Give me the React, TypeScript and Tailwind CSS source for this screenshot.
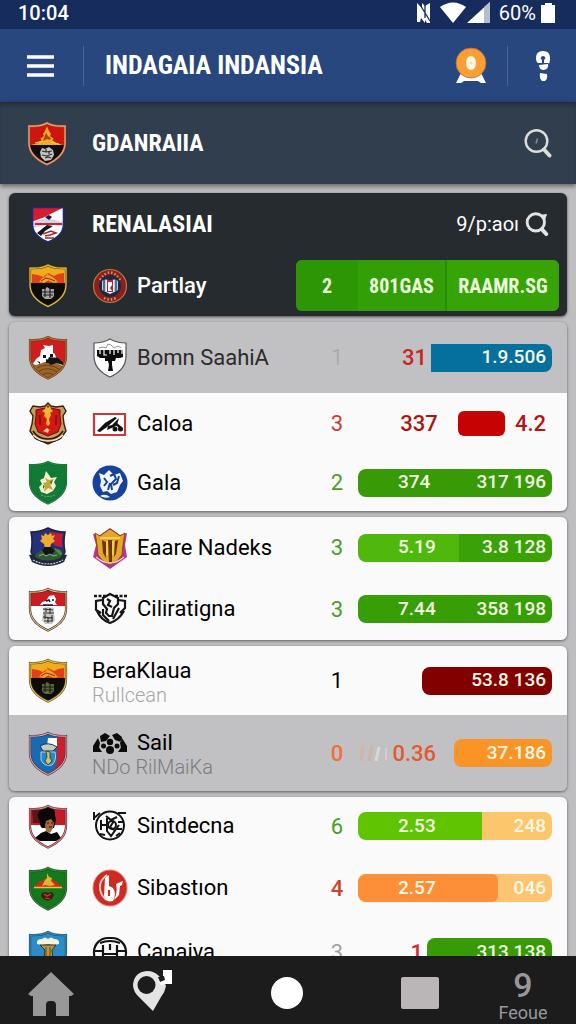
import { useId } from 'react';
import type { ReactNode } from 'react';

const SHIELD = 'M20 2 C15 5 9 5.5 2 5 V22 C2 33 10 39 20 43.500 C30 39 38 33 38 22 V5 C31 5.500 25 5 20 2Z';

function Shield({ rim, edge = '#5c3a12', children }: { rim: string; edge?: string; children: ReactNode }) {
  const id = useId();
  return (
    <svg viewBox="0 0 40 45" className="h-[45px] w-10 shrink-0" aria-hidden="true">
      <clipPath id={id}>
        <path d={SHIELD} />
      </clipPath>
      <g clipPath={`url(#${id})`}>{children}</g>
      <path d={SHIELD} fill="none" stroke={edge} strokeWidth="2.200" />
      <path d={SHIELD} fill="none" stroke={rim} strokeWidth="1.100" />
    </svg>
  );
}

function PeakCrest() {
  return (
    <Shield rim="#e8a878" edge="#a85838">
      <path d="M0 0h40v25H0z" fill="#cc160e" />
      <path d="M0 24h40v21H0z" fill="#100c0c" />
      <path d="M20 5l2 5 2 3-1 2 4 3-2 1 4 3 7 2H4l7-2 4-3-2-1 4-3-1-2 2-3z" fill="#f2ac24" />
      <path d="M17 17l2-5 2 3 3 2-1 2-3-1-4 2z" fill="#a4480c" />
      <path d="M8 22l8-2M24 21l8 2" stroke="#fbd460" strokeWidth="1" />
      <path d="M15 27l3 1 4-2 4 3 1 5-3 5-6 1-4-4-1-5z" fill="#c4c4c4" />
      <path d="M15 30l4 1 6-1M15 34l5 1 5-2M19 28v3M18 37l3-1 3 1M22 31v2" stroke="#2c2c2c" strokeWidth="1.200" fill="none" />
    </Shield>
  );
}

function SunriseCrest({ mark = '#a8a8a8' }) {
  return (
    <Shield rim="#e6c650" edge="#54400c">
      <path d="M0 0h40v21H0z" fill="#f0ac1c" />
      <path d="M4 11l6 1 5 2 5-4 6 3 4-2 6-1v11H4z" fill="#e0401a" />
      <path d="M11 19l3-4 3-1 2-3 4 2 4 3 3 3-4 1-4-2-5 2z" fill="#f0a028" />
      <path d="M13 18l5-3 4 1 5 2M17 20l4-2" stroke="#84300c" fill="none" />
      <path d="M0 20h40v25H0z" fill="#0e0c0a" />
      <path d="M14 26h3l2-2 3 2h4v7l-3 3h-6l-3-3z" fill={mark} />
      <path d="M17 25v9M22 25v10M14 29h12M15 32h10" stroke="#1a1a16" strokeWidth="1.100" />
    </Shield>
  );
}

function StripeCrest() {
  return (
    <svg viewBox="0 0 40 45" className="h-[45px] w-10 shrink-0" aria-hidden="true">
      <path d="M4.500 5.500h31v17c0 8-7 14-15.500 17.500C11.500 36.500 4.500 30.500 4.500 22.500z" fill="#fff" />
      <path d="M4.500 5.500h31l-20 10-11 4z" fill="#d51c30" />
      <path d="M5 20l14-4 16 4v4l-13-2-17 4z" fill="#cfd6e8" />
      <path d="M17 15l4-2 3 2-3 3z" fill="#161c38" />
      <path d="M7 22h27" stroke="#d51c30" strokeWidth="2" />
      <path d="M9 31l10-8 6 1-8 5-4 5z" fill="#14161c" />
      <path d="M15 32l8-3 5 2-6 2-5 1M17 36h9" stroke="#9c2828" strokeWidth="1.500" fill="none" />
      <path d="M4.500 5.500h31v17c0 8-7 14-15.500 17.500C11.500 36.500 4.500 30.500 4.500 22.500z" fill="none" stroke="#1c2a78" strokeWidth="1.600" />
    </svg>
  );
}

function BullCrest() {
  return (
    <Shield rim="#b07840" edge="#6a3414">
      <path d="M0 0h40v45H0z" fill="#cf1d1d" />
      <path d="M0 29q20-9 40 2v14H0z" fill="#9c6428" />
      <path d="M5 29l3-5 4-3 1-6 4-2-2-3 6 1 4-1v8l2 1 1 4 6 3 1 5-7-3-11-1-9 3z" fill="#fff" />
      <path d="M21 22l9 1 5 4v3l-7-2-5 2-4-3z" fill="#141414" />
      <path d="M15 20h3v3h-3zM22 19h3v3h-3zM18 24l3 1v3h-3zM9 26l3 1v2z" fill="#141414" />
      <path d="M9 33q11-6 22 1M11 36q9-5 18 1M14 40q6-4 12 0" stroke="#6a3c14" strokeWidth=".9" fill="none" />
    </Shield>
  );
}

function RoyalCrest() {
  return (
    <svg viewBox="0 0 40 45" className="h-[45px] w-10 shrink-0" aria-hidden="true">
      <path d="M20 2l3 3 5 1 7-1 3 5-3 5 1 8 2 7-5 7-13 6-13-6-5-7 2-7 1-8-3-5 3-5 7 1 5-1z" fill="#c89c54" stroke="#401c0c" strokeWidth="1.400" />
      <path d="M8 9l9-2 3-2 3 2 9 2v6l1 8-3 8-10 4-10-4-3-8 1-8z" fill="#d01814" stroke="#601010" />
      <path d="M17 8l1-3 2 2 2-2 1 3 2 2-3 2 1 2-2 4 1 5-2 2-2-2 1-5-3-3 1-3-3-2z" fill="#f2b62e" />
      <path d="M12 14v10M28 14v10" stroke="#7c0c0c" strokeWidth="1.300" />
      <path d="M15 30l4-3 4 3-2-1-1 3z" fill="#f0c8a0" />
      <path d="M5 30q5 8 15 8t15-8M7 37q13 8 26 0" stroke="#241812" strokeWidth="1.500" fill="none" />
      <path d="M5 34q6 6 15 6t15-6" stroke="#f1e2c2" strokeWidth="1.500" fill="none" />
    </svg>
  );
}

function GreenCrest() {
  return (
    <Shield rim="#2c8848" edge="#0c6428">
      <path d="M0 0h40v45H0z" fill="#117a36" />
      <path d="M12 20l4-2 2-7 3 4 2 3 6-1-3 5 2 4-3 5-6 3-6-2-2-5 3-3z" fill="#f4f0d0" />
      <path d="M17 18l4 2 5-1-4 5 3 6-5-2-4 4 1-6-2-3 4-1z" fill="#c8a42c" />
      <path d="M22 22l3-2-2 5zM15 25l2 1-2 3z" fill="#117a36" />
      <path d="M13 35q7 3 14 0" stroke="#6cb068" fill="none" strokeDasharray="2 1" />
    </Shield>
  );
}

function EagleCrest() {
  return (
    <svg viewBox="0 0 40 45" className="h-[45px] w-10 shrink-0" aria-hidden="true">
      <path d="M20 3q-8 4-17 4 2 10 0 20 3 9 17 13 14-4 17-13-2-10 0-20-9 0-17-4z" fill="#26307a" stroke="#1c2438" strokeWidth="1.500" />
      <path d="M21 7q7 1 14 1.500-2 9 0 14l-8-2-6-6z" fill="#c41c38" />
      <path d="M26 23l6 2 3 5-5 3z" fill="#508c30" />
      <path d="M6 31l7-6 13-1 8 8-6 5-10 2z" fill="#2c5c30" />
      <path d="M13 10l3 1 1-3 3 2 3-2 1 3 3-1-2 4 2 2-4 3-1 4h-5l-1-4-4-3 2-2z" fill="#f0aa2c" />
      <path d="M14 25l3-3h6l4 4-4 4h-6z" fill="#10141a" />
      <path d="M11 31l4-2 3 2 4-2 3 2 4-1" stroke="#9cb080" fill="none" />
      <path d="M1 30l5-1 2 4q12 5 24 0l2-4 5 1-3 7q-16 8-32 0z" fill="#20283a" />
      <path d="M5 35q15 8 30 0" stroke="#c9cedb" strokeWidth="1.200" fill="none" strokeDasharray="2 1" />
    </svg>
  );
}

function RedWhiteCrest() {
  return (
    <Shield rim="#d8c48c" edge="#3c1c14">
      <path d="M0 0h40v45H0z" fill="#fdfdfd" />
      <path d="M0 0h40v19H0z" fill="#cb1c24" />
      <path d="M12 18l2-3 4-1 3-5 5-1 2 4-1 3 2 3z" fill="#fff" />
      <path d="M18 14l3-1 1 2M24 13h2M15 18h10" stroke="#1a1a1a" strokeWidth="1.500" fill="none" />
      <path d="M15 21l5-1 6 1v5l1 7-3 4h-7l-3-4 1-7z" fill="#c8c8c8" />
      <path d="M15 22l10 1M15 26h11M15 30l10 1M16 34h9M18 21v4M22 21v6M17 27v5M20 30v6M24 28v6" stroke="#303030" strokeWidth="1.100" />
    </Shield>
  );
}

function BlueRedCrest() {
  return (
    <Shield rim="#d8a8a8" edge="#48202c">
      <path d="M0 0h40v45H0z" fill="#166bb4" />
      <path d="M29 0h11v45H22q7-8 7-18z" fill="#c8202c" />
      <path d="M20 7h9v9l-10-1z" fill="#fff" />
      <path d="M12 15q8-5 17 1l-4 4H15z" fill="#c4ccc4" stroke="#15344c" />
      <path d="M13 21h14q2 8-3 13-8 2-11-5z" fill="#2888c4" stroke="#d8e4ec" strokeWidth=".8" />
      <path d="M18 20l4 1v6l2 3-4 4-3-4 2-4z" fill="#cfc468" stroke="#173a32" strokeWidth=".8" />
    </Shield>
  );
}

function PortraitCrest() {
  return (
    <Shield rim="#c89090" edge="#641c20">
      <path d="M0 0h40v45H0z" fill="#fff" />
      <path d="M0 0h40v21H0z" fill="#c41c24" />
      <path d="M4 5h9v14H5z" fill="#5c1418" />
      <path d="M10 9q3-6 10-6 8 1 7 8l1 5-2 8H14q-3-3-2-7-3-4-2-8z" fill="#0c0808" />
      <path d="M18 17l5-2 3 4-1 5-3 5-4-2-1-5z" fill="#a8683c" />
      <path d="M19 19h2M23 19h2M21 23h3" stroke="#2c1008" />
      <path d="M7 34l6-5 5-2 5 3 6-2 4 6-5 3H12z" fill="#080808" />
    </Shield>
  );
}

function GreenMountainCrest() {
  return (
    <Shield rim="#3c8c3c" edge="#184c18">
      <path d="M0 0h40v45H0z" fill="#14781c" />
      <path d="M6 21q4-5 9-7 5-3 10 0 5 2 9 7z" fill="#d02c14" />
      <path d="M19 7l2 4 3 1-1 3 4 4-5 1-5-1-3 1 3-6 2-2z" fill="#e0b434" />
      <path d="M6 21.500h28" stroke="#e8c440" strokeWidth="1.300" />
      <path d="M14 27l3-1 3 1 4-1 2 3-2 4-4 2-5-2-2-3z" fill="#4c1810" />
      <path d="M16 28l3 2 4-2M17 32l5 1" stroke="#c04838" strokeWidth="1.200" fill="none" />
    </Shield>
  );
}

function SkyCrest() {
  return (
    <Shield rim="#3c88b4" edge="#1c4c6c">
      <path d="M0 0h40v45H0z" fill="#2c8cc8" />
      <path d="M9 14q-1-5 5-5 3-3 6 0 3-3 6 0 6 0 5 5l-5 1-6-1-6 1z" fill="#f4f0dc" />
      <path d="M12 15h16l-4 5 1 9H16l1-9z" fill="#b89840" stroke="#3c3018" />
      <path d="M18 17v12M22 17v12" stroke="#5c4818" />
    </Shield>
  );
}

/* second column club badges */

function RoundBadge() {
  return (
    <svg viewBox="0 0 36 36" className="size-9" aria-hidden="true">
      <circle cx="18" cy="18" r="16.500" fill="#8c2018" stroke="#b87850" strokeWidth="1.200" />
      <path d="M8 12q10-15 20 0" fill="none" stroke="#e8b890" strokeWidth="2.500" strokeDasharray="1.500 2" opacity=".75" />
      <path d="M12 30q6 3 12 0" fill="none" stroke="#e8b890" strokeWidth="2.500" strokeDasharray="1.500 2" opacity=".75" />
      <circle cx="18" cy="18" r="11" fill="#1c2844" />
      <path d="M10 13q4-3 8 0 4-3 8 0v9l-8 4-8-4z" fill="#e8eef2" />
      <path d="M12 12v11M24 12v11" stroke="#48709c" strokeWidth="2.500" />
      <path d="M15 12h6v12h-6z" fill="#b02830" />
      <path d="M16 14h4v3l-2 3 2 3h-4z" fill="#fff" />
    </svg>
  );
}

function HammerBadge() {
  return (
    <svg viewBox="0 0 36 40" className="h-10 w-9" aria-hidden="true">
      <path d="M18 1q7 4 16 4v13c0 10-7 17-16 21C9 35 2 28 2 18V5q9 0 16-4z" fill="#fff" stroke="#555" strokeWidth="1.200" />
      <path d="M5 12h26v7l-3 1H8l-3-2z" fill="#0c0c0c" />
      <path d="M8 12v4M12 12v5h3M18 12v4M22 12v5M26 12v3M30 12v4" stroke="#fff" strokeWidth="1.200" fill="none" />
      <path d="M13 20h11l-1 3h-3v4l1 6h-5l1-6-1-4h-3z" fill="#0c0c0c" />
      <path d="M7 10l4-1 3 1 2-4 3 1 3 3 4-2 3 2" stroke="#909090" fill="none" />
    </svg>
  );
}

function FlagBadge() {
  return (
    <svg viewBox="0 0 36 36" className="size-9" aria-hidden="true">
      <path d="M2 8h31v21H2z" fill="#fff" stroke="#c83840" strokeWidth="2.200" />
      <path d="M5 25l8-8 10-6 2 1-10 9-7 5z" fill="#111" />
      <path d="M27 12l-7 7-4 1-1 4 7-3 3-2z" fill="#111" />
      <circle cx="23" cy="23" r="2.500" fill="#111" />
      <circle cx="28.500" cy="23" r="2.500" fill="#111" />
      <path d="M23 17l6 5" stroke="#111" strokeWidth="2.500" />
    </svg>
  );
}

function LionBadge() {
  return (
    <svg viewBox="0 0 36 36" className="size-9" aria-hidden="true">
      <circle cx="18" cy="18" r="17.500" fill="#14429c" />
      <path d="M7 8l5 2 5-5 3 3 2 2 6-2 3 8-3 4-3 7-6 2-4-3-4 1-3-6 1-5z" fill="#f2f5fb" />
      <path d="M12 13l3 4-3 4M18 11l4-2 2 5-5 5 1 6M27 11l-2 7-4 2M16 25l2-7" stroke="#14429c" strokeWidth="2" fill="none" />
      <path d="M8 31q5-3 10 1-5 2-10-1z" fill="#f2f5fb" />
    </svg>
  );
}

function CrownBadge() {
  return (
    <svg viewBox="0 0 36 42" className="h-[42px] w-9" aria-hidden="true">
      <path d="M1 7l7 1 10-7 10 7 7-2-2 12 2 12-17 12L1 30l3-12z" fill="#b03890" />
      <path d="M3 6l5 3 4-3 6-4 6 4 4 3 5-3-2 12-1 10-5 6-7 4-7-4-5-6-1-10z" fill="#e4a828" stroke="#8c4418" />
      <path d="M10 13l4 2v16l-3-5zM16 13h4v22h-3zM23 14l3-1-2 14-2 3z" fill="#6c340c" />
      <path d="M8 11h20M15 14v14M21 14v14" stroke="#f8d858" strokeWidth="1.500" />
      <path d="M4 30q14 12 28 0" fill="none" stroke="#f0c8e0" strokeWidth="1.200" />
    </svg>
  );
}

function LineShieldBadge() {
  return (
    <svg viewBox="0 0 36 36" className="size-9" fill="none" stroke="#151515" strokeWidth="2.200" aria-hidden="true">
      <path d="M2 5h12M23 5h12" strokeDasharray="3 1.500" strokeWidth="2.500" />
      <path d="M18 3l-7 4v6l4 5-1 4 3 3h3l2-8 4-4V7z" />
      <path d="M10 9L4 10v9l5 3M26 9l7 1v7l-5 5M5 20q4 9 13 12 9-3 14-12" />
      <path d="M11 18v6l6 6M27 17l-6 11M15 8l3 2-2 4 4 2" />
    </svg>
  );
}

function DomeBadge() {
  return (
    <svg viewBox="0 0 36 22" className="h-[22px] w-9" aria-hidden="true">
      <g fill="#0c0c0c">
        <path d="M8 4l5-3 5 3-4 5-5 1zM20 3l5-2 5 4-1 5-6-2zM1 14l5-8 2 5-1 5-1 4H1zM35 14l-5-8-2 5 1 5 1 4h5z" />
        <circle cx="18" cy="10" r="3.200" />
        <circle cx="18" cy="18" r="4" />
        <circle cx="11.500" cy="14" r="2.500" />
        <circle cx="25" cy="14" r="2.500" />
        <path d="M6 14l4 6H4zM30 14l-4 6h6z" />
      </g>
    </svg>
  );
}

function MonogramBadge() {
  return (
    <svg viewBox="0 0 36 36" className="size-9" fill="none" stroke="#141414" strokeWidth="2" aria-hidden="true">
      <circle cx="18" cy="17.500" r="14" />
      <path d="M2 4v8M2 10l6-5M26 5h8M9 12v10M9 17h6M15 10v13l4 5 8-11M14 8l5 4 6-3M22 13l-4 6 4 3M26 14h5M25 21h5" />
      <circle cx="20" cy="17" r="4" />
      <path d="M8 26l5 1M24 28l4-3" />
    </svg>
  );
}

function SwirlBadge() {
  return (
    <svg viewBox="0 0 36 38" className="h-[38px] w-9" aria-hidden="true">
      <ellipse cx="18" cy="19" rx="17" ry="18" fill="#cc2a22" stroke="#e88070" />
      <path d="M15 6q-11 8-5 20l4 5" fill="none" stroke="#f4d4cc" strokeWidth="1.800" />
      <path d="M13 9l4-3v11l4 2q4 6 0 13-8 2-9-5z" fill="#fff" />
      <path d="M17 21v6" stroke="#cc2a22" strokeWidth="2" />
      <path d="M24 15l7-3-1 4-2 1-1 9-5 5q4-8 2-16z" fill="#fff" />
    </svg>
  );
}

function BallBadge() {
  return (
    <svg viewBox="0 0 36 36" className="size-9" fill="none" stroke="#141414" strokeWidth="2.200" aria-hidden="true">
      <rect x="2" y="4" width="32" height="29" rx="14" />
      <path d="M1 17h10M25 17h10M11 20h14M11 11v18M25 11v18M8 9q10-4 20 0M18 10v6" />
    </svg>
  );
}

function SearchIcon({ className, heavy }: { className: string; heavy?: boolean }) {
  return (
    <svg viewBox="0 0 28 30" className={className} fill="none" stroke="currentColor" aria-hidden="true">
      <circle cx="12.500" cy="13" r="10.800" strokeWidth={heavy ? 3.6 : 2.4} />
      <path d="M20 21.500l5.500 6" strokeWidth={heavy ? 5 : 4} strokeLinecap="round" />
      {heavy ? (
        <path d="M19 4l7-1-3 8z" fill="currentColor" />
      ) : (
        <path d="M13.500 10.500l-1.500 5" strokeWidth="1.500" opacity=".5" />
      )}
    </svg>
  );
}

type Segment = { text?: string; className: string };

function Bar({ className, segments }: { className: string; segments: Segment[] }) {
  return (
    <div className={`flex h-7 overflow-hidden text-[19px] font-medium text-[#f4f8e4] ${className}`}>
      {segments.map((s, i) => (
        <span key={i} className={`flex items-center whitespace-nowrap ${s.className}`}>
          {s.text}
        </span>
      ))}
    </div>
  );
}

type Team = {
  crest: ReactNode;
  badge?: ReactNode;
  name: string;
  sub?: string;
  subColor?: string;
  count: string;
  countColor: string;
  row: string;
  result: ReactNode;
};

const groups: Team[][] = [
  [
    {
      crest: <BullCrest />,
      badge: <HammerBadge />,
      name: 'Bomn SaahiA',
      count: '1',
      countColor: 'text-[#a4a4a6] font-light',
      row: 'h-[71px] bg-[#c1c1c3] text-[#2b2b2d]',
      result: (
        <>
          <span className="mr-1 text-[#cc2222]">31</span>
          <Bar className="w-[121px] rounded-r-lg bg-[#06709c]" segments={[{ text: '1.9.506', className: 'flex-1 justify-end pr-1.5' }]} />
        </>
      ),
    },
    {
      crest: <RoyalCrest />,
      badge: <FlagBadge />,
      name: 'Caloa',
      count: '3',
      countColor: 'text-[#cf3a30]',
      row: 'h-[61px] bg-[#fafafa]',
      result: (
        <>
          <span className="mr-5 text-[#ac1414]">337</span>
          <div className="mr-2.5 h-[25px] w-[47px] rounded-md bg-[#c60202]" />
          <span className="mr-1.5 text-[#b41414]">4.2</span>
        </>
      ),
    },
    {
      crest: <GreenCrest />,
      badge: <LionBadge />,
      name: 'Gala',
      count: '2',
      countColor: 'text-[#46a028]',
      row: 'h-[57px] bg-[#fafafa]',
      result: (
        <Bar
          className="w-full rounded-lg bg-[#379a06]"
          segments={[
            { text: '374', className: 'flex-1 pl-10' },
            { text: '317 196', className: 'pr-1.5' },
          ]}
        />
      ),
    },
  ],
  [
    {
      crest: <EagleCrest />,
      badge: <CrownBadge />,
      name: 'Eaare Nadeks',
      count: '3',
      countColor: 'text-[#46a028]',
      row: 'h-[61px] bg-[#fafafa]',
      result: (
        <Bar
          className="w-full rounded-lg"
          segments={[
            { text: '5.19', className: 'w-[52%] bg-[#50b80c] pl-10' },
            { text: '3.8 128', className: 'flex-1 justify-end bg-[#3aa206] pr-1.5' },
          ]}
        />
      ),
    },
    {
      crest: <RedWhiteCrest />,
      badge: <LineShieldBadge />,
      name: 'Ciliratigna',
      count: '3',
      countColor: 'text-[#46a028]',
      row: 'h-[62px] bg-[#fafafa]',
      result: (
        <Bar
          className="w-full rounded-lg bg-[#379e06]"
          segments={[
            { text: '7.44', className: 'flex-1 pl-10' },
            { text: '358 198', className: 'pr-1.5' },
          ]}
        />
      ),
    },
  ],
  [
    {
      crest: <SunriseCrest mark="#5c6c38" />,
      name: 'BeraKlaua',
      sub: 'Rullcean',
      subColor: 'text-[#a6a6a8]',
      count: '1',
      countColor: 'text-black',
      row: 'h-[69px] bg-[#fafafa]',
      result: (
        <Bar className="w-[130px] rounded-lg bg-[#820000]" segments={[{ text: '53.8 136', className: 'flex-1 justify-end pr-1.5' }]} />
      ),
    },
    {
      crest: <BlueRedCrest />,
      badge: <DomeBadge />,
      name: 'Sail',
      sub: 'NDo RilMaiKa',
      subColor: 'text-[#7c7c7e]',
      count: '0',
      countColor: 'text-[#f07038] font-medium',
      row: 'h-[76px] bg-[#c1c1c3]',
      result: (
        <>
          <svg viewBox="0 0 32 20" className="mr-auto h-5 w-8" strokeWidth="3" aria-hidden="true">
            <path d="M3 18L5 2M11 18l3-16" stroke="#e0a888" opacity=".5" />
            <path d="M18 18l3-14" stroke="#e8e0d8" opacity=".7" />
            <path d="M28 5v12" stroke="#d0d0cc" strokeWidth="2" />
          </svg>
          <span className="mr-[18px] text-[#e05a30]">0.36</span>
          <Bar className="w-[98px] rounded-lg bg-[#fa9426]" segments={[{ text: '37.186', className: 'flex-1 justify-end pr-1.5' }]} />
        </>
      ),
    },
  ],
  [
    {
      crest: <PortraitCrest />,
      badge: <MonogramBadge />,
      name: 'Sintdecna',
      count: '6',
      countColor: 'text-[#46a020]',
      row: 'h-[58px] bg-[#fafafa]',
      result: (
        <Bar
          className="w-full rounded-lg"
          segments={[
            { text: '2.53', className: 'w-[64%] bg-[#60c400] pl-10' },
            { text: '248', className: 'flex-1 justify-end bg-[#fcc66c] pr-1.5' },
          ]}
        />
      ),
    },
    {
      crest: <GreenMountainCrest />,
      badge: <SwirlBadge />,
      name: 'Sibastıon',
      count: '4',
      countColor: 'text-[#cc4428] font-medium',
      row: 'h-[66px] bg-[#fafafa]',
      result: (
        <Bar
          className="w-full rounded-lg bg-[#fcc470]"
          segments={[
            { text: '2.57', className: 'w-[72%] rounded-r-md bg-[#fd8f38] pl-10' },
            { text: '046', className: 'flex-1 justify-end pr-1.5' },
          ]}
        />
      ),
    },
    {
      crest: <SkyCrest />,
      badge: <BallBadge />,
      name: 'Canaiya',
      count: '3',
      countColor: 'text-[#a2a2a4]',
      row: 'h-[62px] bg-[#fafafa]',
      result: (
        <>
          <span className="mr-1 text-[#cc3030]">1</span>
          <Bar className="w-[125px] rounded-lg bg-[#379a06]" segments={[{ text: '313 138', className: 'flex-1 justify-end pr-1.5' }]} />
        </>
      ),
    },
  ],
];

function TeamRow({ team }: { team: Team }) {
  return (
    <li className={`flex items-center pr-[15px] pl-[19px] ${team.row}`}>
      {team.crest}
      <div className="ml-6 min-w-0 flex-1">
        <div className={`flex items-center ${team.sub ? 'pt-1' : ''}`}>
          {team.badge && <span className="mr-[9px] shrink-0">{team.badge}</span>}
          <span className="text-[22px] leading-6 whitespace-nowrap">{team.name}</span>
        </div>
        {team.sub && <div className={`text-xl leading-6 font-light whitespace-nowrap ${team.subColor}`}>{team.sub}</div>}
      </div>
      <span className={`w-[42px] text-center text-[22px] ${team.countColor}`}>{team.count}</span>
      <div className="flex w-[194px] items-center justify-end text-[22px] font-medium">{team.result}</div>
    </li>
  );
}

export default function App() {
  return (
    <div className="flex h-screen flex-col overflow-hidden bg-[#bebec0] font-['Roboto',sans-serif] text-black">
      <div className="flex h-[29px] shrink-0 items-center bg-[#162c5c] pr-5 pb-1 pl-[18px] text-white">
        <span className="text-xl leading-6 font-medium">10:04</span>
        <svg viewBox="0 0 78 24" className="ml-auto h-6 w-[78px]" fill="#fff" aria-hidden="true">
          <path d="M4 2l5 5V2l3 3 5-3v20h-3l-2-3v3L8 17l-1 4H4z" />
          <path d="M6 2l11 18M12 4v13" stroke="#162c5c" strokeWidth="1.300" />
          <path d="M27 6q13-9 26 0L40 22z" />
          <path d="M54 22L77 1v21z" />
          <path d="M71 6l6-5v21h-6z" fill="#b4bccd" />
        </svg>
        <span className="ml-2 text-xl leading-6">60%</span>
        <svg viewBox="0 0 16 22" className="ml-1 h-[22px] w-4" fill="#fff" aria-hidden="true">
          <path d="M5 1h7v2h3v18H1V3h4z" />
        </svg>
      </div>

      <header className="flex h-[73px] shrink-0 items-center bg-[#28477f] text-white">
        <button type="button" aria-label="Menu" className="ml-[27px]">
          <svg viewBox="0 0 27 24" className="h-6 w-[27px]" stroke="#fff" strokeWidth="3.600" aria-hidden="true">
            <path d="M0 3h27M0 12h27M0 21h27" />
          </svg>
        </button>
        <div className="ml-[29px] h-10 w-px bg-[#4a679c]" />
        <h1 className="ml-[21px] font-['Roboto_Condensed','Roboto',sans-serif] text-[26px] font-bold whitespace-nowrap">
          INDAGAIA INDANSIA
        </h1>
        <button type="button" aria-label="Awards" className="ml-auto">
          <svg viewBox="0 0 32 38" className="h-[38px] w-8" aria-hidden="true">
            <path d="M6 26h20l5 10h-5l-3-2H9l-3 2H1z" fill="#fff" />
            <circle cx="16" cy="16" r="15" fill="#fb9f34" stroke="#b46a38" strokeWidth="0.800" />
            <ellipse cx="16" cy="16" rx="5" ry="7" fill="#fff8e4" />
            <circle cx="16" cy="16" r="1.500" fill="#fbd8a0" />
          </svg>
        </button>
        <div className="ml-5 h-10 w-px bg-[#4a679c]" />
        <button type="button" aria-label="More options" className="mr-[26px] ml-7">
          <svg viewBox="0 0 14 30" className="h-[30px] w-[14px]" fill="#fff" aria-hidden="true">
            <path d="M0 7q0-7 7-7t7 7-2 5H8V9q2-1 1-3-2-2-4 0-1 2 1 3v3H2Q0 11 0 7z" />
            <path d="M3 14l9-1q1 5-4 6-5 0-5-5zM4 22l7 1q1 5-2 7H6q-3-3-2-8z" />
          </svg>
        </button>
      </header>

      <div className="relative flex h-[82px] shrink-0 items-center bg-[#303e4e] pr-6 pl-[27px] text-white shadow-[0_2px_5px_rgba(0,0,0,0.5),inset_0_5px_6px_-4px_rgba(0,0,0,0.45)]">
        <PeakCrest />
        <h2 className="ml-[25px] font-['Roboto_Condensed','Roboto',sans-serif] text-2xl font-bold">
          GDANRAIIA
        </h2>
        <button type="button" aria-label="Search teams" className="ml-auto text-[#dcdcdc]">
          <SearchIcon className="h-[30px] w-7" />
        </button>
      </div>

      <main className="flex min-h-0 flex-1 flex-col gap-1.5 overflow-hidden px-[9px] pt-[9px]">
        <section className="shrink-0 rounded-md bg-[#252b2e] pr-2 pl-[19px] text-white shadow-[0_1px_3px_rgba(0,0,0,0.6)]">
          <div className="flex h-[62px] items-center">
            <StripeCrest />
            <h2 className="ml-6 font-['Roboto_Condensed','Roboto',sans-serif] text-2xl font-bold">
              RENALASIAI
            </h2>
            <span className="ml-auto text-xl">9/p:aoı</span>
            <button type="button" aria-label="Search league" className="mr-2.5 ml-1.5 text-[#e4e4e4]">
              <SearchIcon className="size-6" heavy />
            </button>
          </div>
          <div className="flex h-[61px] items-center">
            <SunriseCrest />
            <span className="ml-6">
              <RoundBadge />
            </span>
            <span className="ml-[9px] text-[22px] font-medium">Partlay</span>
            <div className="ml-auto flex h-[51px] w-[263px] overflow-hidden rounded-md bg-[#319f05] font-['Roboto_Condensed','Roboto',sans-serif] text-xl font-bold text-[#ecfadc]">
              <span className="flex w-[62px] items-center justify-center bg-[#2c9604]">2</span>
              <span className="flex flex-1 items-center justify-center border-r-2 border-[#2a8c06]">801GAS</span>
              <span className="flex w-[112px] items-center justify-center bg-[#36a406]">RAAMR.SG</span>
            </div>
          </div>
        </section>

        {groups.map((group, i) => (
          <ul key={i} className="shrink-0 overflow-hidden rounded-md shadow-[0_1px_3px_rgba(0,0,0,0.5)]">
            {group.map((team) => (
              <TeamRow key={team.name} team={team} />
            ))}
          </ul>
        ))}
      </main>

      <nav className="relative grid h-[68px] shrink-0 grid-cols-[102fr_102fr_166fr_100fr_106fr] items-center justify-items-center bg-[#1c1c1d] text-[#98989a]">
        <button type="button" aria-label="Home">
          <svg viewBox="0 0 46 46" className="mt-2 size-[46px]" fill="#989898" aria-hidden="true">
            <path d="M23 1L46 23l-3 2h-2v20H28V34q0-4-4-4h-2q-4 0-4 4v11H5V25H3l-3-2z" />
          </svg>
        </button>
        <button type="button" aria-label="Places">
          <svg viewBox="0 0 42 42" className="size-[42px]" fill="#e4e4e4" aria-hidden="true">
            <path d="M1 16Q2 3 15 2q7 0 12 5 5 4 7 10-1 6-5 11l-8 14L8 29Q1 23 1 16z" />
            <circle cx="14.500" cy="16" r="9" fill="#1c1c1d" />
            <path d="M31 1h9v14h-7l-4 1-3-4 5-2z" fill="#fff" />
            <path d="M26 8l6-1 1 4-5 2z" fill="#1c1c1d" />
          </svg>
        </button>
        <button type="button" aria-label="Start" className="mt-1.5 size-8 rounded-full bg-white" />
        <button type="button" aria-label="Recent" className="mt-1.5 h-8 w-[38px] rounded-xs bg-[#bab6b8]" />
        <button type="button" className="mt-2.5 flex flex-col items-center">
          <span className="text-[34px] leading-9 font-medium">9</span>
          <span className="text-lg leading-5">Feoue</span>
        </button>
      </nav>
    </div>
  );
}
